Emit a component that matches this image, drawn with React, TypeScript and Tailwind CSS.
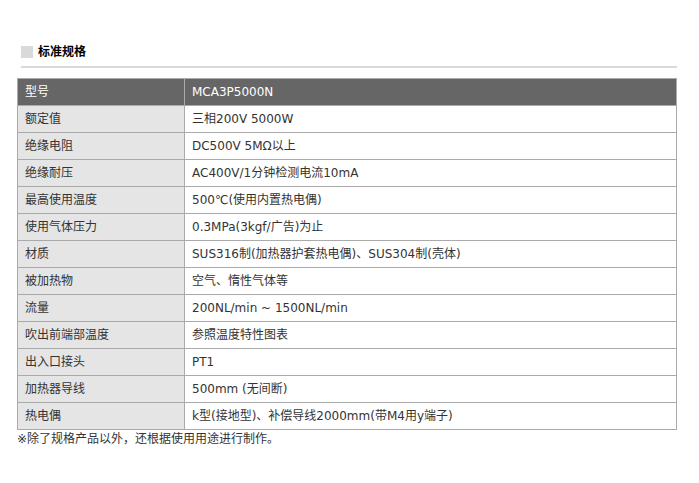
const rows: [string, string][] = [
  ['额定值', '三相200V 5000W'],
  ['绝缘电阻', 'DC500V 5MΩ以上'],
  ['绝缘耐压', 'AC400V/1分钟检测电流10mA'],
  ['最高使用温度', '500℃(使用内置热电偶)'],
  ['使用气体压力', '0.3MPa(3kgf/广告)为止'],
  ['材质', 'SUS316制(加热器护套热电偶)、SUS304制(壳体)'],
  ['被加热物', '空气、惰性气体等'],
  ['流量', '200NL/min ~ 1500NL/min'],
  ['吹出前端部温度', '参照温度特性图表'],
  ['出入口接头', 'PT1'],
  ['加热器导线', '500mm (无间断)'],
  ['热电偶', 'k型(接地型)、补偿导线2000mm(带M4用y端子)'],
];

export default function App() {
  return (
    <div
      className="w-[699px] h-[483px] bg-white text-[12px] text-[#333]"
      style={{ fontFamily: '"DejaVu Sans", "Noto Sans CJK SC", sans-serif' }}
    >
      <div className="pt-[46px] pl-[21px] pr-[22px]">
        <div className="flex items-center gap-[5px] h-[12px]">
          <div className="w-[12px] h-[12px] bg-[#d9d9d9]" />
          <span className="font-bold text-[12px] text-black leading-none">标准规格</span>
        </div>
        <div className="mt-[8px] h-[2px] bg-[#d9d9d9]" />
      </div>

      <div className="pl-[17px] pr-[22px] mt-[10px]">
        <table className="w-[660px] border-collapse border border-[#aaa]">
          <tbody>
            <tr className="bg-[#666] text-white">
              <td className="w-[167px] h-[27px] border border-[#aaa] px-[7px] py-0">型号</td>
              <td className="h-[27px] border border-[#aaa] px-[7px] py-0">MCA3P5000N</td>
            </tr>
            {rows.map(([k, v]) => (
              <tr key={k}>
                <td className="w-[167px] h-[27px] border border-[#aaa] bg-[#e5e5e5] px-[7px] py-0">{k}</td>
                <td className="h-[27px] border border-[#aaa] bg-white px-[7px] py-0">{v}</td>
              </tr>
            ))}
          </tbody>
        </table>
        <p className="mt-[1px] leading-[16px]">※除了规格产品以外，还根据使用用途进行制作。</p>
      </div>
    </div>
  );
}
